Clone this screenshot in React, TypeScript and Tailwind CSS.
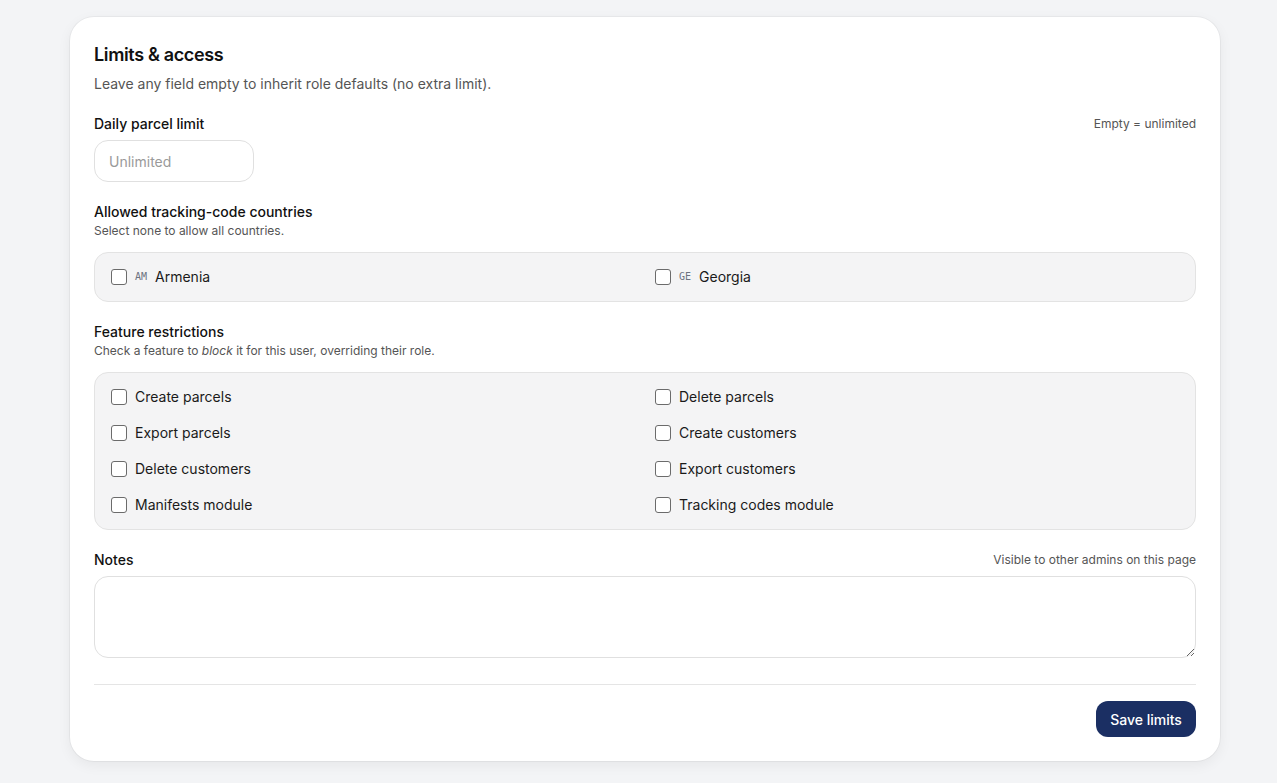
import React from "react";

function Box() {
  return <span className="inline-block h-4 w-4 shrink-0 rounded-[3px] border border-[#6b6b6b] bg-white" />;
}

function Item({ label, code }: { label: string; code?: string }) {
  return (
    <label className="flex h-4 items-center gap-2 text-[14px] leading-4 text-[#1a1a1a]">
      <Box />
      {code && (
        <span className="text-[10px] text-[#6b7280]" style={{ fontFamily: '"DejaVu Sans Mono", monospace' }}>
          {code}
        </span>
      )}
      <span>{label}</span>
    </label>
  );
}

export default function App() {
  const features = [
    "Create parcels",
    "Delete parcels",
    "Export parcels",
    "Create customers",
    "Delete customers",
    "Export customers",
    "Manifests module",
    "Tracking codes module",
  ];
  return (
    <div
      className="min-h-[783px] bg-[#f3f4f6] px-[70px] pt-[17px] pb-[22px]"
      style={{ fontFamily: 'Inter, "Noto Sans", sans-serif' }}
    >
      <div className="w-[1150px] rounded-[24px] bg-white px-6 pt-6 pb-6 shadow-[0_0_0_1px_rgba(0,0,0,0.04),0_4px_14px_rgba(0,0,0,0.06)]">
        <h2 className="text-[18px] font-semibold leading-7 tracking-[-0.02em] text-[#111]">Limits &amp; access</h2>
        <p className="mt-[5px] text-[14px] leading-5 text-[#555]">
          Leave any field empty to inherit role defaults (no extra limit).
        </p>

        <div className="mt-5">
          <div className="flex items-center justify-between">
            <span className="text-[14px] font-medium leading-5 text-[#111]">Daily parcel limit</span>
            <span className="text-[12px] leading-4 text-[#555]">Empty = unlimited</span>
          </div>
          <input
            placeholder="Unlimited"
            className="mt-1.5 block h-[42px] w-[160px] rounded-[14px] border border-[#e0e0e0] bg-white px-[14px] text-[14px] text-[#111] outline-none placeholder:text-[#9a9a9a]"
          />
        </div>

        <div className="mt-5">
          <div className="text-[14px] font-medium leading-5 text-[#111]">Allowed tracking-code countries</div>
          <div className="mt-px text-[12px] leading-4 text-[#555]">Select none to allow all countries.</div>
          <div className="mt-[13px] grid grid-cols-2 gap-x-5 rounded-[14px] border border-[#e3e3e3] bg-[#f4f4f5] p-4">
            <Item label="Armenia" code="AM" />
            <Item label="Georgia" code="GE" />
          </div>
        </div>

        <div className="mt-5">
          <div className="text-[14px] font-medium leading-5 text-[#111]">Feature restrictions</div>
          <div className="mt-px text-[12px] leading-4 text-[#555]">
            Check a feature to <em>block</em> it for this user, overriding their role.
          </div>
          <div className="mt-[13px] grid grid-cols-2 gap-x-5 gap-y-5 rounded-[14px] border border-[#e3e3e3] bg-[#f4f4f5] p-4">
            {features.map((f) => (
              <Item key={f} label={f} />
            ))}
          </div>
        </div>

        <div className="mt-5">
          <div className="flex items-center justify-between">
            <span className="text-[14px] font-medium leading-5 text-[#111]">Notes</span>
            <span className="text-[12px] leading-4 text-[#555]">Visible to other admins on this page</span>
          </div>
          <textarea className="mt-1.5 block h-[82px] w-full rounded-[14px] border border-[#e0e0e0] bg-white px-3 py-2 text-[14px] outline-none" />
        </div>

        <div className="mt-[26px] flex justify-end border-t border-[#e5e5e5] pt-4">
          <button className="h-9 w-[100px] rounded-[12px] bg-[#1b2f63] text-[14px] font-medium text-white">
            Save limits
          </button>
        </div>
      </div>
    </div>
  );
}
